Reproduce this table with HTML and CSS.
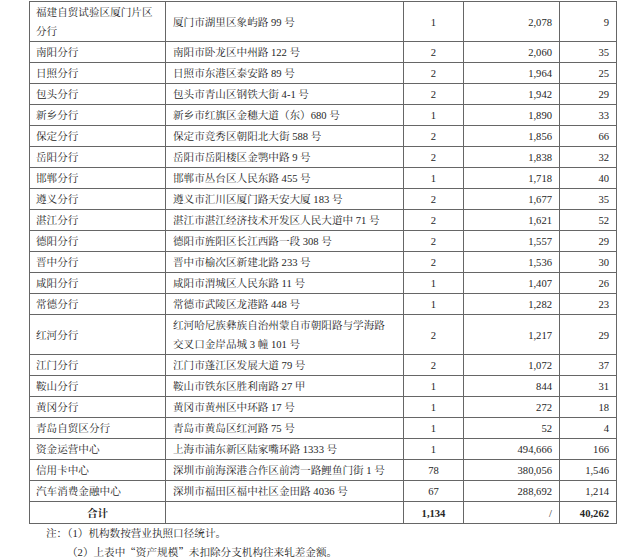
FILE: index.html
```html
<!DOCTYPE html>
<html lang="zh-CN">
<head>
<meta charset="utf-8">
<title>分支机构</title>
<link rel="stylesheet" href="styles.css">
</head>
<body>
<div class="page">
  <table class="branches">
    <colgroup>
      <col class="c-name">
      <col class="c-addr">
      <col class="c-count">
      <col class="c-assets">
      <col class="c-staff">
    </colgroup>
    <tbody>
      <tr><td class="name">福建自贸试验区厦门片区分行</td><td class="addr">厦门市湖里区象屿路 99 号</td><td class="num-c">1</td><td class="num-r">2,078</td><td class="num-r">9</td></tr>
      <tr><td class="name">南阳分行</td><td class="addr">南阳市卧龙区中州路 122 号</td><td class="num-c">2</td><td class="num-r">2,060</td><td class="num-r">35</td></tr>
      <tr><td class="name">日照分行</td><td class="addr">日照市东港区泰安路 89 号</td><td class="num-c">2</td><td class="num-r">1,964</td><td class="num-r">25</td></tr>
      <tr><td class="name">包头分行</td><td class="addr">包头市青山区钢铁大街 4-1 号</td><td class="num-c">2</td><td class="num-r">1,942</td><td class="num-r">29</td></tr>
      <tr><td class="name">新乡分行</td><td class="addr">新乡市红旗区金穗大道（东）680 号</td><td class="num-c">1</td><td class="num-r">1,890</td><td class="num-r">33</td></tr>
      <tr><td class="name">保定分行</td><td class="addr">保定市竞秀区朝阳北大街 588 号</td><td class="num-c">2</td><td class="num-r">1,856</td><td class="num-r">66</td></tr>
      <tr><td class="name">岳阳分行</td><td class="addr">岳阳市岳阳楼区金鹗中路 9 号</td><td class="num-c">2</td><td class="num-r">1,838</td><td class="num-r">32</td></tr>
      <tr><td class="name">邯郸分行</td><td class="addr">邯郸市丛台区人民东路 455 号</td><td class="num-c">1</td><td class="num-r">1,718</td><td class="num-r">40</td></tr>
      <tr><td class="name">遵义分行</td><td class="addr">遵义市汇川区厦门路天安大厦 183 号</td><td class="num-c">2</td><td class="num-r">1,677</td><td class="num-r">35</td></tr>
      <tr><td class="name">湛江分行</td><td class="addr">湛江市湛江经济技术开发区人民大道中 71 号</td><td class="num-c">2</td><td class="num-r">1,621</td><td class="num-r">52</td></tr>
      <tr><td class="name">德阳分行</td><td class="addr">德阳市旌阳区长江西路一段 308 号</td><td class="num-c">2</td><td class="num-r">1,557</td><td class="num-r">29</td></tr>
      <tr><td class="name">晋中分行</td><td class="addr">晋中市榆次区新建北路 233 号</td><td class="num-c">2</td><td class="num-r">1,536</td><td class="num-r">30</td></tr>
      <tr><td class="name">咸阳分行</td><td class="addr">咸阳市渭城区人民东路 11 号</td><td class="num-c">1</td><td class="num-r">1,407</td><td class="num-r">26</td></tr>
      <tr><td class="name">常德分行</td><td class="addr">常德市武陵区龙港路 448 号</td><td class="num-c">1</td><td class="num-r">1,282</td><td class="num-r">23</td></tr>
      <tr><td class="name">红河分行</td><td class="addr">红河哈尼族彝族自治州蒙自市朝阳路与学海路<br>交叉口金岸品城 3 幢 101 号</td><td class="num-c">2</td><td class="num-r">1,217</td><td class="num-r">29</td></tr>
      <tr><td class="name">江门分行</td><td class="addr">江门市蓬江区发展大道 79 号</td><td class="num-c">2</td><td class="num-r">1,072</td><td class="num-r">37</td></tr>
      <tr><td class="name">鞍山分行</td><td class="addr">鞍山市铁东区胜利南路 27 甲</td><td class="num-c">1</td><td class="num-r">844</td><td class="num-r">31</td></tr>
      <tr><td class="name">黄冈分行</td><td class="addr">黄冈市黄州区中环路 17 号</td><td class="num-c">1</td><td class="num-r">272</td><td class="num-r">18</td></tr>
      <tr><td class="name">青岛自贸区分行</td><td class="addr">青岛市黄岛区红河路 75 号</td><td class="num-c">1</td><td class="num-r">52</td><td class="num-r">4</td></tr>
      <tr><td class="name">资金运营中心</td><td class="addr">上海市浦东新区陆家嘴环路 1333 号</td><td class="num-c">1</td><td class="num-r">494,666</td><td class="num-r">166</td></tr>
      <tr><td class="name">信用卡中心</td><td class="addr">深圳市前海深港合作区前湾一路鲤鱼门街 1 号</td><td class="num-c">78</td><td class="num-r">380,056</td><td class="num-r">1,546</td></tr>
      <tr><td class="name">汽车消费金融中心</td><td class="addr">深圳市福田区福中社区金田路 4036 号</td><td class="num-c">67</td><td class="num-r">288,692</td><td class="num-r">1,214</td></tr>
      <tr class="total"><td class="total-label">合计</td><td class="addr"></td><td class="num-c strong">1,134</td><td class="num-r">/</td><td class="num-r strong">40,262</td></tr>
    </tbody>
  </table>
  <div class="notes">
    <p class="note"><span class="cjk">注：（</span>1<span class="cjk">）</span>机构数按营业执照口径统计。</p>
    <p class="note indent"><span class="cjk">（</span>2<span class="cjk">）</span>上表中<span class="cjk">“</span>资产规模<span class="cjk">”</span>未扣除分支机构往来轧差金额。</p>
  </div>
</div>
</body>
</html>
```

FILE: styles.css
```css
html, body {
  margin: 0;
  padding: 0;
  background: #ffffff;
}

body {
  font-family: "Liberation Serif", "Noto Serif CJK SC", "Noto Sans CJK SC", serif;
  font-size: 10.6px;
  color: #262626;
}

.page {
  padding: 1px 0 0 29px;
}

.branches {
  border-collapse: collapse;
  table-layout: fixed;
  width: 587px;
}

.c-name { width: 136px; }
.c-addr { width: 238px; }
.c-count { width: 60px; }
.c-assets { width: 96px; }
.c-staff { width: 57px; }

.branches td {
  border: 1px solid #666666;
  line-height: 19px;
  padding: 1px 7px 0 7px;
  vertical-align: middle;
}

.branches tr.total td {
  padding-top: 2px;
}

.branches td.name {
  padding-left: 6px;
  padding-right: 2px;
}

.branches td.addr {
  padding-left: 7px;
  padding-right: 2px;
  white-space: nowrap;
}

.branches td.num-c {
  text-align: center;
}

.branches td.num-r {
  text-align: right;
  padding-right: 7px;
}

.branches td.total-label {
  text-align: center;
  font-weight: bold;
}

.strong {
  font-weight: bold;
}

.cjk {
  font-family: "Noto Serif CJK SC", "Noto Sans CJK SC", serif;
}

.notes {
  padding-left: 17px;
}

.note {
  margin: 0;
  line-height: 18px;
}

.note.indent {
  padding-left: 21px;
}
```
